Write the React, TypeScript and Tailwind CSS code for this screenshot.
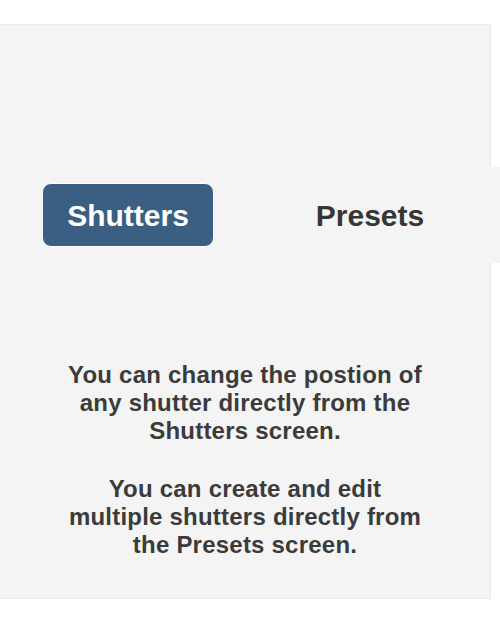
export default function App() {
  return (
    <div className="w-[500px] h-[629px] bg-white pt-[24px]" style={{ fontFamily: '"Liberation Sans", Arial, sans-serif' }}>
      <div className="w-[491px] h-[575px] bg-[#f4f4f4] border-t border-b border-r border-[#ececec] flex flex-col">
        <div className="h-[142px]" />
        <div className="w-[500px] h-[96px] bg-[#f4f4f4] flex items-center">
          <div className="w-[250px] flex">
            <button className="ml-[42px] w-[172px] h-[64px] rounded-[9px] bg-[#3a5f82] border border-white text-white text-[30px] font-bold flex items-center justify-center">
              Shutters
            </button>
          </div>
          <div className="w-[240px] text-center text-[30px] font-bold text-[#363636]">Presets</div>
        </div>
        <div className="mt-[98px] w-[490px] text-center text-[24px] leading-[28px] font-bold tracking-[0.22px] text-[#3b3b3b]">
          <p>You can change the postion of</p>
          <p>any shutter directly from the</p>
          <p>Shutters screen.</p>
          <p className="mt-[30px]">You can create and edit</p>
          <p>multiple shutters directly from</p>
          <p>the Presets screen.</p>
        </div>
      </div>
    </div>
  );
}
